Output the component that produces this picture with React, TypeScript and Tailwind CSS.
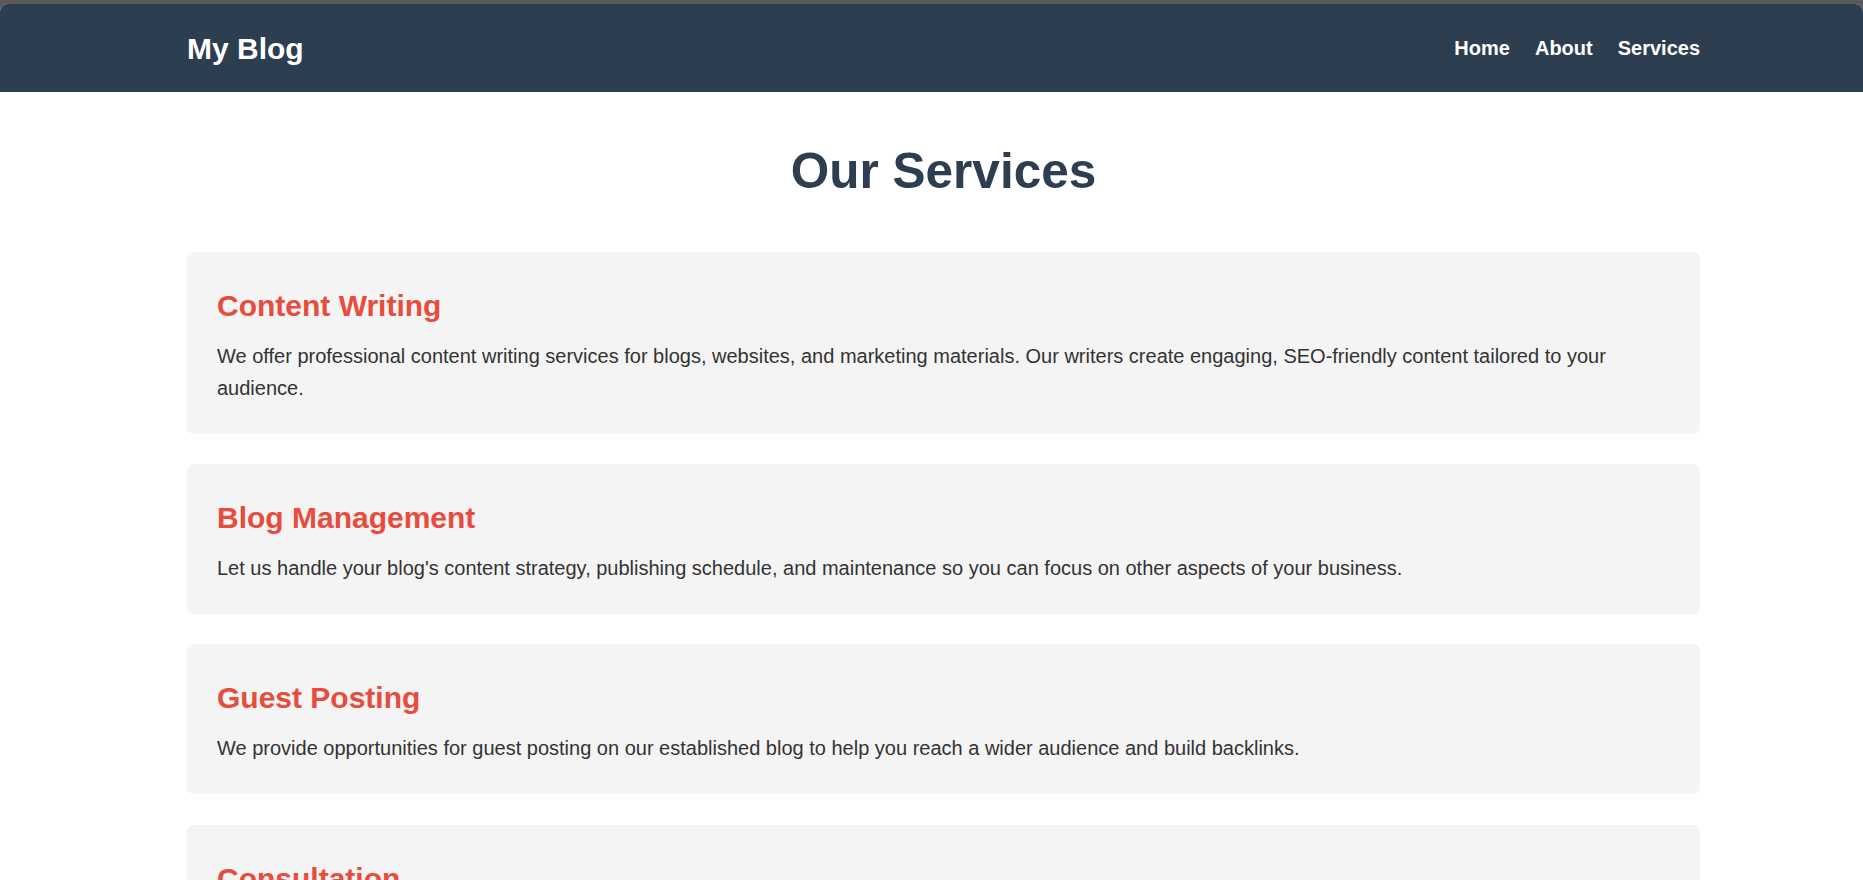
const services = [
  {
    title: 'Content Writing',
    text: 'We offer professional content writing services for blogs, websites, and marketing materials. Our writers create engaging, SEO-friendly content tailored to your audience.',
  },
  {
    title: 'Blog Management',
    text: "Let us handle your blog's content strategy, publishing schedule, and maintenance so you can focus on other aspects of your business.",
  },
  {
    title: 'Guest Posting',
    text: 'We provide opportunities for guest posting on our established blog to help you reach a wider audience and build backlinks.',
  },
  {
    title: 'Consultation',
    text: 'Get expert advice on growing your blog, improving your content, and reaching more readers with our one-on-one consultation sessions.',
  },
];

const App = () => {
  return (
    <div className="min-h-screen bg-[#595959] font-['Liberation_Sans',Arial,sans-serif]">
      <div className="h-[4px]" />
      <div className="bg-white rounded-t-[8px] overflow-hidden">
        <header className="bg-[#2c3e50] h-[88px] pl-6">
          <div className="mx-auto w-[1513px] h-full flex items-center justify-between">
            <a href="#" className="text-white font-bold text-[30px]">My Blog</a>
            <nav className="flex items-center gap-[25px] text-white font-bold text-[20px]">
              <a href="#">Home</a>
              <a href="#">About</a>
              <a href="#">Services</a>
            </nav>
          </div>
        </header>

        <main className="pl-6 pt-[51px] pb-10">
          <div className="mx-auto w-[1513px]">
            <h1 className="text-center text-[#2c3e50] font-bold text-[49.5px] leading-[56px] mb-[53px]">Our Services</h1>

            <div className="flex flex-col gap-[30.7px]">
              {services.map((s) => (
                <div key={s.title} className="bg-[#f4f4f4] rounded-[7px] px-[30px] pt-[30px] pb-[29.5px]">
                  <h2 className="text-[#e74c3c] font-bold text-[30px] leading-[47px] mb-[11px]">{s.title}</h2>
                  <p className="text-[#333] text-[20px] leading-[32px]">{s.text}</p>
                </div>
              ))}
            </div>
          </div>
        </main>
      </div>
    </div>
  );
};

export default App;
